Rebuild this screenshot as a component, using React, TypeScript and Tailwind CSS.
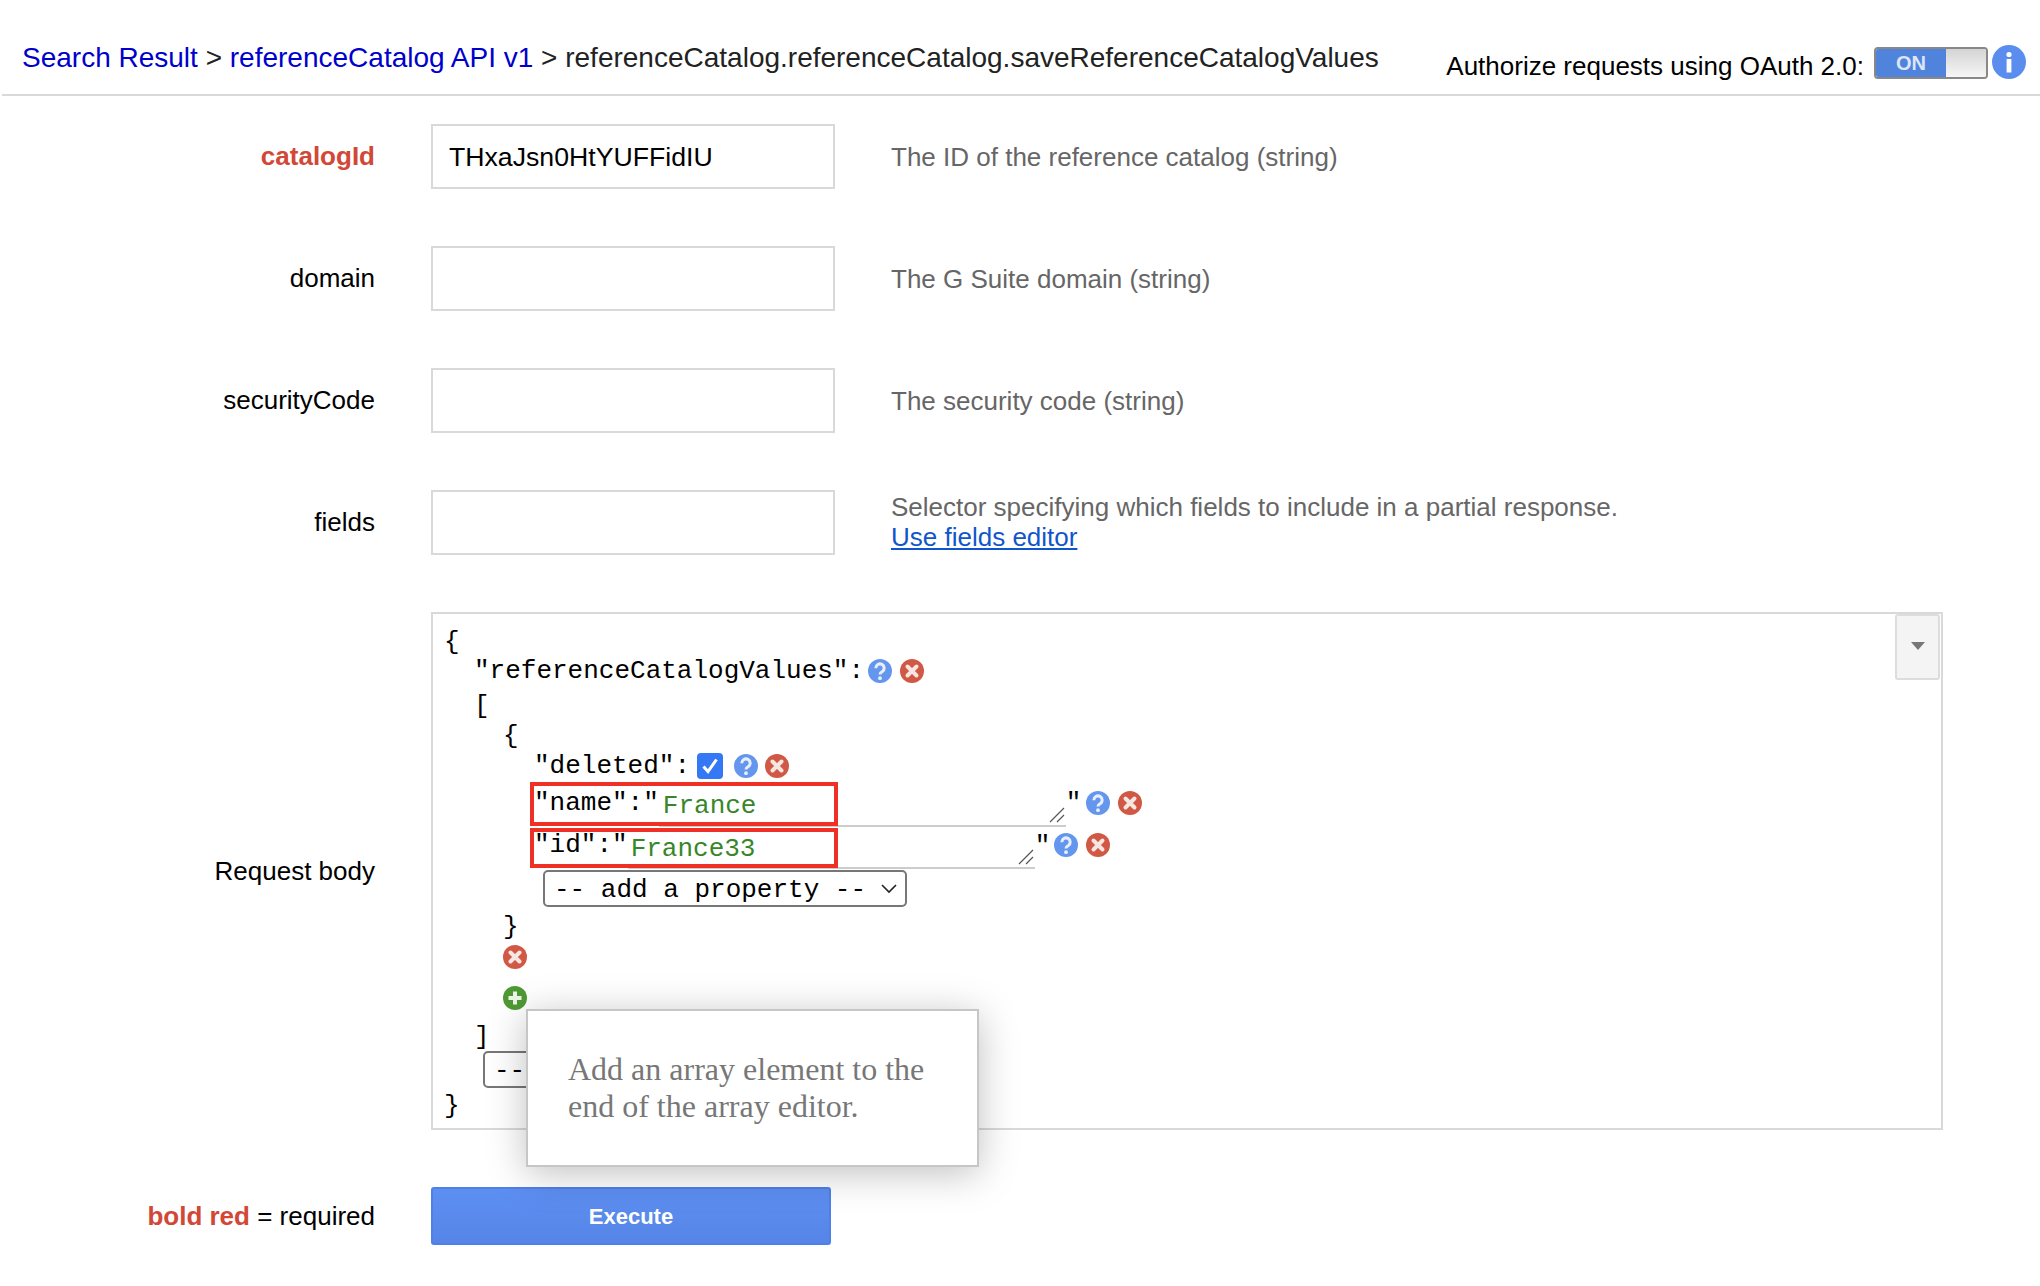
const sans = "font-['Liberation_Sans',Arial,sans-serif]";

function HelpIcon() {
  return (
    <svg width="24" height="24" viewBox="0 0 24 24" className="shrink-0">
      <circle cx="12" cy="12" r="12" fill="#6496ee" />
      <path d="M7.8 9.2a4.2 4.2 0 1 1 6.4 3.5c-1.3.8-2.2 1.3-2.2 2.8" fill="none" stroke="#e8effc" strokeWidth="3" />
      <circle cx="12" cy="19.2" r="1.9" fill="#e8effc" />
    </svg>
  );
}

function RemoveIcon() {
  return (
    <svg width="24" height="24" viewBox="0 0 24 24" className="shrink-0">
      <circle cx="12" cy="12" r="12" fill="#d05844" />
      <path d="M7.5 7.5l9 9M16.5 7.5l-9 9" stroke="#f6e6e2" strokeWidth="4" strokeLinecap="round" />
    </svg>
  );
}

function AddIcon() {
  return (
    <svg width="24" height="24" viewBox="0 0 24 24" className="shrink-0">
      <circle cx="12" cy="12" r="12" fill="#4f9a34" />
      <path d="M12 5.5v13M5.5 12h13" stroke="#eef6ea" strokeWidth="4" />
    </svg>
  );
}

function ResizeHandle() {
  return (
    <svg width="16" height="16" viewBox="0 0 16 16" className="absolute right-[1px] bottom-[2px]">
      <path d="M1 15L15 1M8 15l7-7" stroke="#555" strokeWidth="1.2" fill="none" />
    </svg>
  );
}

function AddProperty({ className }: { className: string }) {
  return (
    <div className={`flex h-[37px] w-[364px] items-center justify-between rounded-[5px] border-2 border-[#777] pl-[9px] pr-[8px] ${className}`}>
      <span className="pt-[3px]">-- add a property --</span>
      <svg width="16" height="10" viewBox="0 0 16 10">
        <path d="M1 1l7 7 7-7" fill="none" stroke="#222" strokeWidth="1.6" />
      </svg>
    </div>
  );
}

function FormRow({ label, value, children, required }: { label: string; value?: string; children: React.ReactNode; required?: boolean }) {
  return (
    <div className="mb-[57px] flex h-[65px] items-center">
      <div className={`w-[375px] text-right ${required ? 'font-bold text-[#d14836]' : 'text-black'}`}>{label}</div>
      <div className="ml-[56px] flex h-[65px] w-[404px] items-center border-2 border-[#d9d9d9] pl-[16px] pt-px text-[26.67px] text-black">{value}</div>
      <div className="ml-[56px] leading-[30px] text-[#666]">{children}</div>
    </div>
  );
}

export default function App() {
  return (
    <main className={`h-[1286px] overflow-hidden bg-white text-[26px] ${sans}`}>
      <header className="ml-[2px] flex h-[96px] justify-between border-b-2 border-[#d9d9d9] pr-[14px]">
        <div className="pl-[20px] pt-[40px] text-[28px] leading-[36px] text-[#222]">
          <a className="text-[#0000cc]">Search Result</a> &gt; <a className="text-[#0000cc]">referenceCatalog API v1</a> &gt; referenceCatalog.referenceCatalog.saveReferenceCatalogValues
        </div>
        <div className="flex items-start">
          <span className="mt-[48px] leading-[36px] text-black">Authorize requests using OAuth 2.0:</span>
          <div className="ml-[10px] mt-[47px] flex h-[32px] w-[114px] overflow-hidden rounded-[4px] border-2 border-[#888]">
            <div className="flex w-[70px] items-center justify-center bg-[#4f83dc] text-[20px] font-bold text-[#dce6f8]">ON</div>
            <div className="flex-1 bg-gradient-to-b from-[#d4d4d4] to-[#f6f6f6]" />
          </div>
          <svg width="34" height="34" viewBox="0 0 34 34" className="ml-[4px] mt-[45px]">
            <circle cx="17" cy="17" r="17" fill="#5b8def" />
            <circle cx="17" cy="9.5" r="2.6" fill="#fff" />
            <rect x="14.6" y="14" width="4.8" height="13.5" fill="#fff" />
          </svg>
        </div>
      </header>

      <div className="pt-[28px]">
        <FormRow label="catalogId" value="THxaJsn0HtYUFFidIU" required>The ID of the reference catalog (string)</FormRow>
        <FormRow label="domain">The G Suite domain (string)</FormRow>
        <FormRow label="securityCode">The security code (string)</FormRow>
        <FormRow label="fields">
          <div className="-mt-[2px]">Selector specifying which fields to include in a partial response.</div>
          <a className="text-[#1155cc] underline">Use fields editor</a>
        </FormRow>

        <div className="flex items-center">
          <div className="w-[375px] text-right text-black">Request body</div>
          <div className="relative ml-[56px] h-[518px] w-[1512px] border-2 border-[#d9d9d9] pt-[13px] font-['Liberation_Mono','Courier_New',monospace] text-black">
            <div className="ml-[11px] h-[30px] leading-[30px]">{'{'}</div>
            <div className="-mt-px ml-[41px] flex h-[30px] items-center leading-[30px]">
              <span>"referenceCatalogValues":</span>
              <span className="-mt-[1px] ml-[4px] flex gap-[8px]"><HelpIcon /><RemoveIcon /></span>
            </div>
            <div className="ml-[41px] mt-[5px] h-[30px] leading-[30px]">[</div>
            <div className="ml-[70px] h-[30px] leading-[30px]">{'{'}</div>
            <div className="ml-[101px] flex h-[30px] items-center leading-[30px]">
              <span>"deleted":</span>
              <span className="ml-[7px] flex h-[26px] w-[26px] items-center justify-center rounded-[4px] bg-[#3478f6]">
                <svg width="20" height="20" viewBox="0 0 20 20">
                  <path d="M3.5 10.5l4.5 5 8.5-12" fill="none" stroke="#fff" strokeWidth="3" />
                </svg>
              </span>
              <span className="ml-[11px] flex gap-[7px]"><HelpIcon /><RemoveIcon /></span>
            </div>

            <div className="ml-[101px] mt-[2px] flex h-[44px] items-start">
              <span className="leading-[40px]">"name":"</span>
              <div className="relative h-[44px] w-[407px] border-b-2 border-[#ccc] pl-[4px] pt-[5px] leading-[36px] text-[#38862a]">
                France
                <ResizeHandle />
              </div>
              <span className="leading-[40px]">"</span>
              <span className="ml-[5px] mt-[8px] flex gap-[8px]"><HelpIcon /><RemoveIcon /></span>
            </div>
            <div className="ml-[101px] flex h-[42px] items-start">
              <span className="leading-[36px]">"id":"</span>
              <div className="relative h-[42px] w-[407px] border-b-2 border-[#ccc] pl-[3px] pt-[4px] leading-[36px] text-[#38862a]">
                France33
                <ResizeHandle />
              </div>
              <span className="leading-[38px]">"</span>
              <span className="ml-[4px] mt-[6px] flex gap-[8px]"><HelpIcon /><RemoveIcon /></span>
            </div>
            <AddProperty className="ml-[110px] mt-px" />

            <div className="ml-[70px] h-[36px] leading-[40px]">{'}'}</div>
            <div className="ml-[70px] mt-[2px]"><RemoveIcon /></div>
            <div className="ml-[70px] mt-[17px]"><AddIcon /></div>
            <div className="ml-[41px] mt-[12px] h-[29px] leading-[30px]">]</div>
            <AddProperty className="ml-[50px]" />
            <div className="ml-[11px] h-[36px] leading-[36px]">{'}'}</div>

            {/* dropdown in the corner of the editor */}
            <div className="absolute right-[1px] top-0 flex h-[66px] w-[45px] items-center justify-center rounded-[3px] border-2 border-[#ddd] bg-[#f4f4f4] pb-[2px]">
              <svg width="14" height="8" viewBox="0 0 14 8">
                <path d="M0 0h14L7 8z" fill="#777" />
              </svg>
            </div>

            {/* red annotation boxes */}
            <div className="absolute left-[97px] top-[168px] h-[44px] w-[308px] border-4 border-[#ee3124]" />
            <div className="absolute left-[97px] top-[214px] h-[40px] w-[308px] border-4 border-[#ee3124]" />

            {/* tooltip for the add button */}
            <div className="absolute left-[93px] top-[395px] h-[158px] w-[453px] border-2 border-[#c6c6c6] bg-white pl-[40px] pt-[40px] font-['Liberation_Serif','Times_New_Roman',serif] text-[32px] leading-[36.5px] text-[#777] shadow-[0_6px_36px_rgba(0,0,0,0.25)]">
              Add an array element to the<br />end of the array editor.
            </div>
          </div>
        </div>

        <div className="mt-[57px] flex h-[58px] items-center">
          <div className="w-[375px] text-right text-black">
            <span className="font-bold text-[#d14836]">bold red</span> = required
          </div>
          <button
            type="button"
            className="ml-[56px] h-[58px] w-[400px] rounded-[3px] border-2 border-[#4f80e6] bg-gradient-to-b from-[#5d8ff2] to-[#5585e6] text-[22px] font-bold text-white"
          >
            Execute
          </button>
        </div>
      </div>
    </main>
  );
}
